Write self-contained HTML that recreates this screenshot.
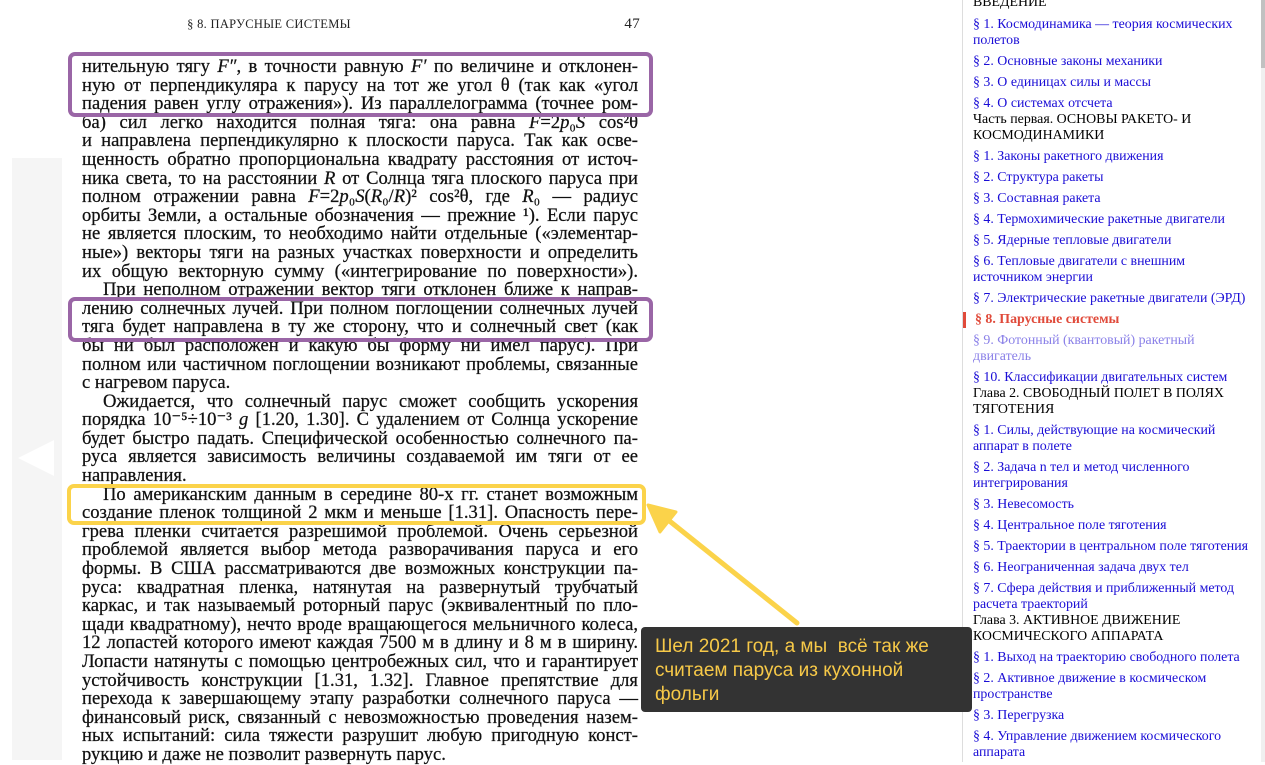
<!DOCTYPE html>
<html><head><meta charset="utf-8"><style>
*{margin:0;padding:0;box-sizing:border-box}
body{width:1265px;height:762px;overflow:hidden;background:#fff;position:relative;font-family:"Liberation Serif",serif}
.lp{position:absolute;left:12px;top:158px;width:50px;height:602px;background:#f5f5f5}
.tri{position:absolute;left:18px;top:440px;width:0;height:0;border-top:18px solid transparent;border-bottom:18px solid transparent;border-right:36px solid #fff}
.hd{position:absolute;top:17px;left:82px;width:558px;font-size:12.5px;color:#222;letter-spacing:.3px}
.hd .c{position:absolute;left:0;width:374px;text-align:center}
.hd .n{position:absolute;right:0;font-size:15px;top:-1px}
.bk{position:absolute;left:82px;top:58px;width:556px;font-size:18.6px;color:#111;line-height:18.6px;-webkit-text-stroke:0.25px #111}
.bk div{height:18.6px;white-space:nowrap;text-align:justify;text-align-last:justify}
.bk .i{padding-left:21px}
.bk .l{text-align-last:left}
.box{position:absolute;border-radius:7px}
.sb{position:absolute;left:962px;top:0;width:300px;height:762px;border-left:1px solid #ddd;font-size:13.9px;line-height:16px}
.sb div{position:absolute;left:10px;width:290px;white-space:nowrap}
.a{color:#1a0dd6}
.h{color:#000}
.scr{position:absolute;left:1261px;top:0;width:4px;height:762px;background:#f0f0f0}
.scr i{position:absolute;left:0;top:0;width:4px;height:68px;background:#c1c1c1}
.tip{position:absolute;left:641px;top:627px;width:331px;height:85px;background:#333;border-radius:4px;color:#f7c948;font-family:"Liberation Sans",sans-serif;font-size:19px;line-height:24px;padding:8px 0 0 14px}
</style></head><body>
<div class="lp"></div><div class="tri"></div>
<div class="hd"><span class="c">§ 8. ПАРУСНЫЕ СИСТЕМЫ</span><span class="n">47</span></div>
<div class="bk">
<div>нительную тягу <i>F″</i>, в точности равную <i>F′</i> по величине и отклонен-</div>
<div>ную от перпендикуляра к парусу на тот же угол θ (так как «угол</div>
<div>падения равен углу отражения»). Из параллелограмма (точнее ром-</div>
<div>ба) сил легко находится полная тяга: она равна <i>F</i>=2<i>p</i>₀<i>S</i> cos²θ</div>
<div>и направлена перпендикулярно к плоскости паруса. Так как осве-</div>
<div>щенность обратно пропорциональна квадрату расстояния от источ-</div>
<div>ника света, то на расстоянии <i>R</i> от Солнца тяга плоского паруса при</div>
<div>полном отражении равна <i>F</i>=2<i>p</i>₀<i>S</i>(<i>R</i>₀/<i>R</i>)² cos²θ, где <i>R</i>₀ — радиус</div>
<div>орбиты Земли, а остальные обозначения — прежние ¹). Если парус</div>
<div>не является плоским, то необходимо найти отдельные («элементар-</div>
<div>ные») векторы тяги на разных участках поверхности и определить</div>
<div>их общую векторную сумму («интегрирование по поверхности»).</div>
<div class="i">При неполном отражении вектор тяги отклонен ближе к направ-</div>
<div>лению солнечных лучей. При полном поглощении солнечных лучей</div>
<div>тяга будет направлена в ту же сторону, что и солнечный свет (как</div>
<div>бы ни был расположен и какую бы форму ни имел парус). При</div>
<div>полном или частичном поглощении возникают проблемы, связанные</div>
<div class="l">с нагревом паруса.</div>
<div class="i">Ожидается, что солнечный парус сможет сообщить ускорения</div>
<div>порядка 10⁻⁵÷10⁻³ <i>g</i> [1.20, 1.30]. С удалением от Солнца ускорение</div>
<div>будет быстро падать. Специфической особенностью солнечного па-</div>
<div>руса является зависимость величины создаваемой им тяги от ее</div>
<div class="l">направления.</div>
<div class="i">По американским данным в середине 80-х гг. станет возможным</div>
<div>создание пленок толщиной 2 мкм и меньше [1.31]. Опасность пере-</div>
<div>грева пленки считается разрешимой проблемой. Очень серьезной</div>
<div>проблемой является выбор метода разворачивания паруса и его</div>
<div>формы. В США рассматриваются две возможных конструкции па-</div>
<div>руса: квадратная пленка, натянутая на развернутый трубчатый</div>
<div>каркас, и так называемый роторный парус (эквивалентный по пло-</div>
<div>щади квадратному), нечто вроде вращающегося мельничного колеса,</div>
<div>12 лопастей которого имеют каждая 7500 м в длину и 8 м в ширину.</div>
<div>Лопасти натянуты с помощью центробежных сил, что и гарантирует</div>
<div>устойчивость конструкции [1.31, 1.32]. Главное препятствие для</div>
<div>перехода к завершающему этапу разработки солнечного паруса —</div>
<div>финансовый риск, связанный с невозможностью проведения назем-</div>
<div>ных испытаний: сила тяжести разрушит любую пригодную конст-</div>
<div class="l">рукцию и даже не позволит развернуть парус.</div>
</div>
<div class="box" style="left:68px;top:52px;width:585px;height:65px;border:4px solid #9a66a6"></div>
<div class="box" style="left:68px;top:297px;width:585px;height:45px;border:4px solid #9a66a6"></div>
<div class="box" style="left:67px;top:484px;width:579px;height:41px;border:4px solid #fbd34a"></div>
<svg style="position:absolute;left:0;top:0" width="1265" height="762">
<line x1="797" y1="623" x2="662" y2="515" stroke="#fbd34a" stroke-width="5" stroke-linecap="round"/>
<polygon points="648,505 676,512 660,532" fill="#fbd34a" stroke="#fbd34a" stroke-width="3" stroke-linejoin="round"/>
</svg>
<div class="sb">
<div class="h" style="top:-5px">ВВЕДЕНИЕ</div>
<div class="a" style="top:17px">§ 1. Космодинамика — теория космических<br>полетов</div>
<div class="a" style="top:54px">§ 2. Основные законы механики</div>
<div class="a" style="top:75px">§ 3. О единицах силы и массы</div>
<div class="a" style="top:96px">§ 4. О системах отсчета</div>
<div class="h" style="top:112px">Часть первая. ОСНОВЫ РАКЕТО- И<br>КОСМОДИНАМИКИ</div>
<div class="a" style="top:149px">§ 1. Законы ракетного движения</div>
<div class="a" style="top:170px">§ 2. Структура ракеты</div>
<div class="a" style="top:191px">§ 3. Составная ракета</div>
<div class="a" style="top:212px">§ 4. Термохимические ракетные двигатели</div>
<div class="a" style="top:233px">§ 5. Ядерные тепловые двигатели</div>
<div class="a" style="top:254px">§ 6. Тепловые двигатели с внешним<br>источником энергии</div>
<div class="a" style="top:291px">§ 7. Электрические ракетные двигатели (ЭРД)</div>
<div style="top:312px;left:0;width:3px;height:16px;background:#e04a3a"></div>
<div style="top:312px;left:12px;color:#e04a3a;font-weight:bold">§ 8. Парусные системы</div>
<div style="top:333px;color:#8a80e8">§ 9. Фотонный (квантовый) ракетный<br>двигатель</div>
<div class="a" style="top:370px">§ 10. Классификации двигательных систем</div>
<div class="h" style="top:386px">Глава 2. СВОБОДНЫЙ ПОЛЕТ В ПОЛЯХ<br>ТЯГОТЕНИЯ</div>
<div class="a" style="top:423px">§ 1. Силы, действующие на космический<br>аппарат в полете</div>
<div class="a" style="top:460px">§ 2. Задача n тел и метод численного<br>интегрирования</div>
<div class="a" style="top:497px">§ 3. Невесомость</div>
<div class="a" style="top:518px">§ 4. Центральное поле тяготения</div>
<div class="a" style="top:539px">§ 5. Траектории в центральном поле тяготения</div>
<div class="a" style="top:560px">§ 6. Неограниченная задача двух тел</div>
<div class="a" style="top:581px">§ 7. Сфера действия и приближенный метод<br>расчета траекторий</div>
<div class="h" style="top:613px">Глава 3. АКТИВНОЕ ДВИЖЕНИЕ<br>КОСМИЧЕСКОГО АППАРАТА</div>
<div class="a" style="top:650px">§ 1. Выход на траекторию свободного полета</div>
<div class="a" style="top:671px">§ 2. Активное движение в космическом<br>пространстве</div>
<div class="a" style="top:708px">§ 3. Перегрузка</div>
<div class="a" style="top:729px">§ 4. Управление движением космического<br>аппарата</div>
</div>
<div class="scr"><i></i></div>
<div class="tip">Шел 2021 год, а мы&nbsp; всё так же<br>считаем паруса из кухонной<br>фольги</div>
</body></html>
